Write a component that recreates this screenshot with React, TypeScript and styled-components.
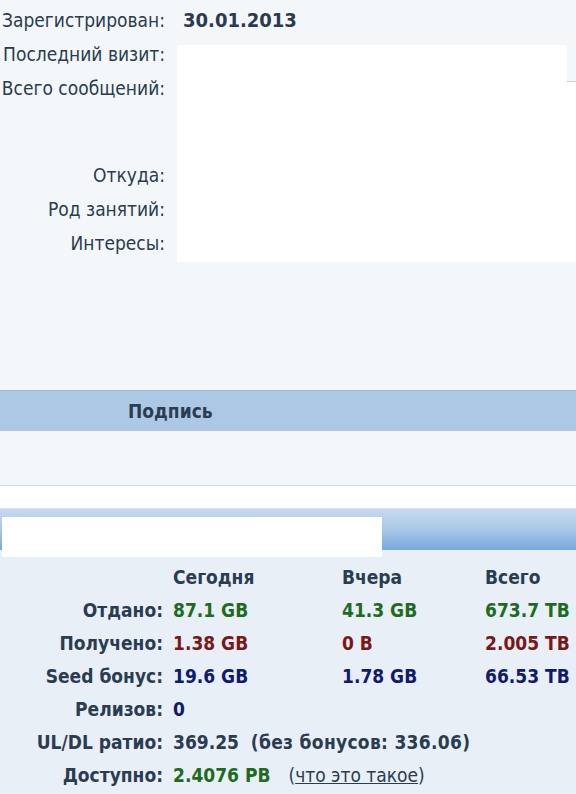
import React from "react";
import styled, { createGlobalStyle } from "styled-components";

const GlobalStyle = createGlobalStyle`
  html, body {
    margin: 0;
    padding: 0;
    background: #f4f7fa;
  }
  body {
    font-family: "DejaVu Sans Condensed", "DejaVu Sans", Verdana, sans-serif;
    font-size: 19px;
    color: #2a3c50;
  }
`;

const Page = styled.div`
  width: 576px;
  height: 794px;
  overflow: hidden;
  display: flex;
  flex-direction: column;
`;

const ProfileSection = styled.section`
  height: 390px;
  display: flex;
  background: #f4f7fa;
`;

const LabelColumn = styled.div`
  width: 165px;
  padding-top: 3px;
  padding-right: 12px;
  display: flex;
  flex-direction: column;
  align-items: flex-end;
  flex-shrink: 0;
`;

const FieldLabel = styled.div<{ $gapBefore?: number }>`
  height: 34px;
  line-height: 34px;
  white-space: nowrap;
  margin-top: ${(p) => p.$gapBefore ?? 0}px;
`;

const ValueColumn = styled.div`
  flex: 1;
  padding-top: 3px;
  display: flex;
  flex-direction: column;
  align-items: stretch;
`;

const DateValue = styled.div`
  height: 34px;
  line-height: 34px;
  font-weight: bold;
  font-size: 20px;
  padding-left: 6px;
  color: #2a3b4f;
`;

const HiddenRow = styled.div`
  display: flex;
  height: 37px;
  margin-top: 8px;
`;

const Hidden = styled.div`
  background: #ffffff;
  flex: 1;
`;

const HiddenBlock = styled.div`
  background: #ffffff;
  height: 180px;
`;

const RowEnd = styled.div`
  width: 9px;
  border-bottom: 1px solid #c9d1da;
`;

const SectionHeader = styled.div`
  height: 40px;
  border-top: 1px solid #a0bcd9;
  background: #adc8e4;
  display: flex;
  align-items: center;
  padding-left: 128px;
  font-weight: bold;
  color: #2a3d53;
`;

const SignatureBody = styled.div`
  height: 54px;
  background: #f4f7fa;
  border-bottom: 1px solid #d3dbe4;
`;

const Spacer = styled.div`
  height: 22px;
  background: #ffffff;
`;

const StatsHead = styled.div`
  position: relative;
  height: 41px;
  border-top: 1px solid #d7e4f2;
  background: linear-gradient(to bottom, #c7daee 0%, #a9c7e7 50%, #77a9de 100%);
`;

const HeadMask = styled.div`
  position: absolute;
  left: 2px;
  top: 8px;
  width: 380px;
  height: 40px;
  background: #ffffff;
`;

const StatsBody = styled.div`
  flex: 1;
  background: #e8eff7;
  padding-top: 10px;
`;

const StatsGrid = styled.div`
  display: grid;
  grid-template-columns: 163px 169px 143px 1fr;
  grid-auto-rows: 33px;
  align-items: center;
  font-weight: bold;
`;

const StatLabel = styled.div`
  text-align: right;
  white-space: nowrap;
`;

const ColHead = styled.div`
  padding-left: 10px;
  color: #2a3c50;
`;

type Tone = "up" | "down" | "bonus" | "plain";

const toneColor: Record<Tone, string> = {
  up: "#1e6b1e",
  down: "#7a1717",
  bonus: "#101a70",
  plain: "#2a3c50",
};

const StatValue = styled.div<{ $tone: Tone; $span?: number }>`
  padding-left: 10px;
  white-space: nowrap;
  color: ${(p) => toneColor[p.$tone]};
  grid-column: ${(p) => (p.$span ? `span ${p.$span}` : "auto")};
`;

const Note = styled.span`
  letter-spacing: 0.3px;
`;

const HelpLink = styled.a`
  font-weight: normal;
  color: #2a3c50;
  margin-left: 18px;
  text-decoration: none;
  span {
    text-decoration: underline;
  }
`;

const rows: { label: string; values: [string, string, string]; tone: Tone }[] = [
  { label: "Отдано:", values: ["87.1 GB", "41.3 GB", "673.7 TB"], tone: "up" },
  { label: "Получено:", values: ["1.38 GB", "0 B", "2.005 TB"], tone: "down" },
  { label: "Seed бонус:", values: ["19.6 GB", "1.78 GB", "66.53 TB"], tone: "bonus" },
];

export default function App() {
  return (
    <Page>
      <GlobalStyle />
      <ProfileSection>
        <LabelColumn>
          <FieldLabel>Зарегистрирован:</FieldLabel>
          <FieldLabel>Последний визит:</FieldLabel>
          <FieldLabel>Всего сообщений:</FieldLabel>
          <FieldLabel $gapBefore={53}>Откуда:</FieldLabel>
          <FieldLabel>Род занятий:</FieldLabel>
          <FieldLabel>Интересы:</FieldLabel>
        </LabelColumn>
        <ValueColumn>
          <DateValue>30.01.2013</DateValue>
          <HiddenRow>
            <Hidden />
            <RowEnd />
          </HiddenRow>
          <HiddenBlock />
        </ValueColumn>
      </ProfileSection>

      <SectionHeader>Подпись</SectionHeader>
      <SignatureBody />
      <Spacer />

      <StatsHead>
        <HeadMask />
      </StatsHead>

      <StatsBody>
        <StatsGrid>
          <div />
          <ColHead>Сегодня</ColHead>
          <ColHead>Вчера</ColHead>
          <ColHead>Всего</ColHead>

          {rows.map((r) => (
            <React.Fragment key={r.label}>
              <StatLabel>{r.label}</StatLabel>
              {r.values.map((v, i) => (
                <StatValue key={i} $tone={r.tone}>
                  {v}
                </StatValue>
              ))}
            </React.Fragment>
          ))}

          <StatLabel>Релизов:</StatLabel>
          <StatValue $tone="bonus" $span={3}>
            0
          </StatValue>

          <StatLabel>UL/DL ратио:</StatLabel>
          <StatValue $tone="plain" $span={3}>
            369.25&nbsp; <Note>(без бонусов: 336.06)</Note>
          </StatValue>

          <StatLabel>Доступно:</StatLabel>
          <StatValue $tone="up" $span={3}>
            2.4076 PB
            <HelpLink href="#">
              (<span>что это такое</span>)
            </HelpLink>
          </StatValue>
        </StatsGrid>
      </StatsBody>
    </Page>
  );
}
